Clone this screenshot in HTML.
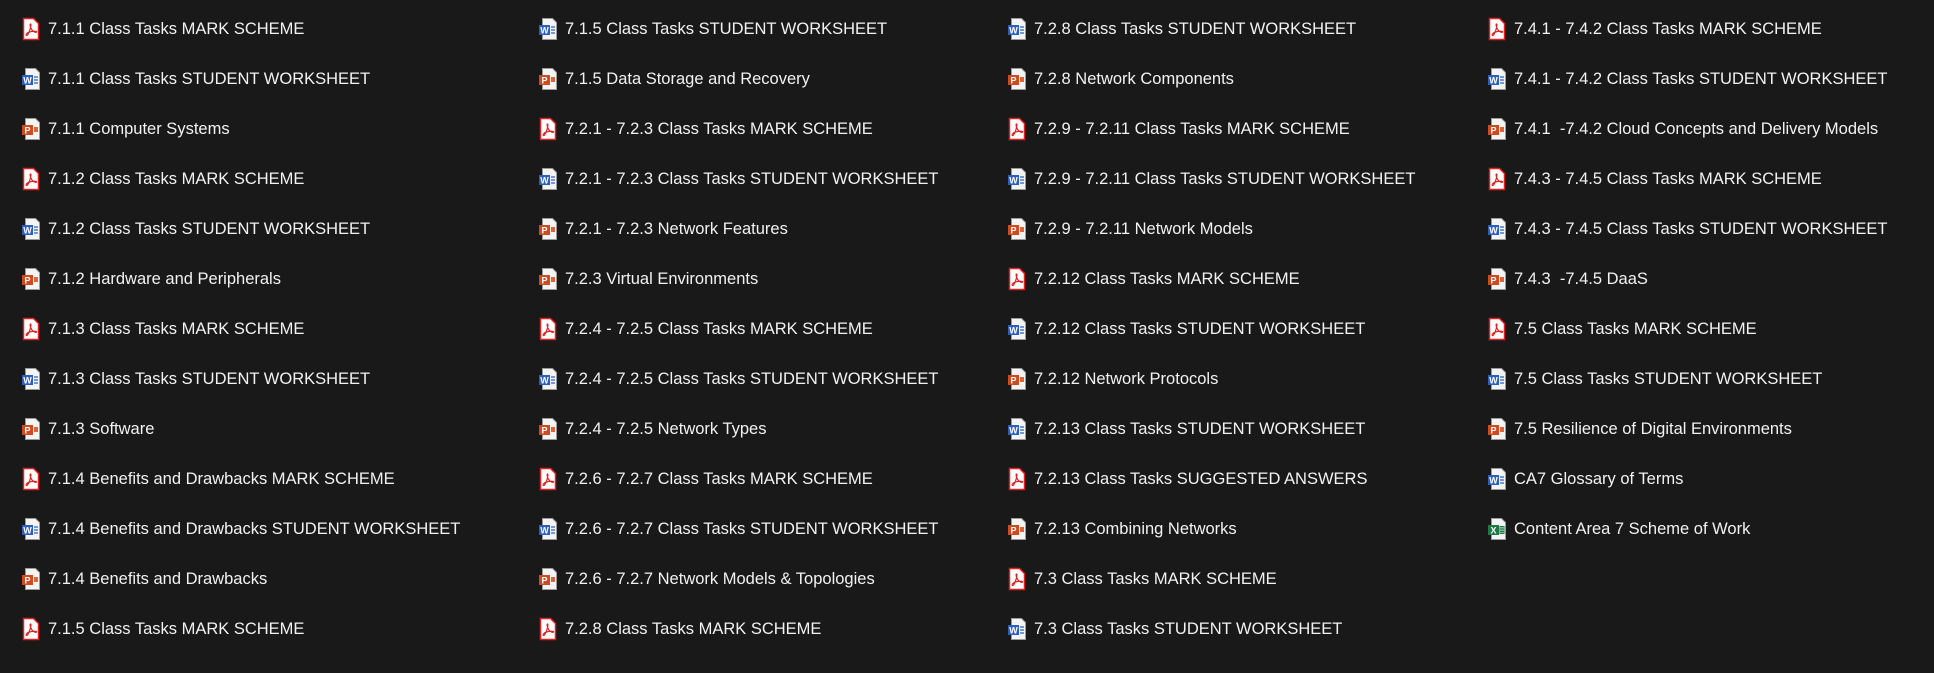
<!DOCTYPE html>
<html><head><meta charset="utf-8"><style>
html,body{margin:0;padding:0;background:#191919;width:1934px;height:673px;overflow:hidden}
body{position:relative;font-family:"Liberation Sans",sans-serif;font-size:16.5px;color:#f2f2f2}
.r{position:absolute;height:24px;line-height:24px;white-space:nowrap}
.r svg{position:absolute;left:-27px;top:0}
</style></head><body>
<svg width="0" height="0" style="position:absolute">
<defs>
<g id="pdf"><path d="M2.5 1.5h10l5 5v16h-15z" fill="#fff" stroke="#e02020" stroke-width="1.5"/><path d="M9.5 7c-1 0 0 4 1.5 6 1 1.5 4 3 4.5 2s-4-1-7 0-4 3-3 3.5 3-4 3.5-6S10.5 7 9.5 7z" fill="none" stroke="#e02020" stroke-width="1.2"/></g>
<g id="doc"><path d="M4.5 1.5h10l4 4v17h-14z" fill="#f4f4f4" stroke="#9a9a9a"/><rect x="1" y="8" width="11" height="10" fill="#2b5fbf"/><text x="6.5" y="16.5" font-size="9" font-weight="bold" fill="#fff" text-anchor="middle" font-family="Liberation Sans">W</text><path d="M13 10h4M13 13h4M13 16h4" stroke="#2b5fbf" stroke-width="1.2"/></g>
<g id="ppt"><path d="M4.5 1.5h10l4 4v17h-14z" fill="#f4f4f4" stroke="#9a9a9a"/><rect x="1" y="8" width="11" height="10" fill="#d04a1f"/><text x="6.5" y="16.5" font-size="9" font-weight="bold" fill="#fff" text-anchor="middle" font-family="Liberation Sans">P</text><path d="M13 10h4v5h-4z" fill="#e0643a"/></g>
<g id="xls"><path d="M4.5 1.5h10l4 4v17h-14z" fill="#f4f4f4" stroke="#9a9a9a"/><rect x="1" y="8" width="11" height="10" fill="#1e7a45"/><text x="6.5" y="16.5" font-size="9" font-weight="bold" fill="#fff" text-anchor="middle" font-family="Liberation Sans">X</text><path d="M13 9.5h4v7h-4zM13 12h4M13 14.5h4M15 9.5v7" fill="none" stroke="#1e7a45" stroke-width="1"/></g>
</defs></svg>
<div id="c"></div>
<script>
var cols=[48,565,1034,1514];
var data=[
[["pdf","7.1.1 Class Tasks MARK SCHEME"],["doc","7.1.1 Class Tasks STUDENT WORKSHEET"],["ppt","7.1.1 Computer Systems"],["pdf","7.1.2 Class Tasks MARK SCHEME"],["doc","7.1.2 Class Tasks STUDENT WORKSHEET"],["ppt","7.1.2 Hardware and Peripherals"],["pdf","7.1.3 Class Tasks MARK SCHEME"],["doc","7.1.3 Class Tasks STUDENT WORKSHEET"],["ppt","7.1.3 Software"],["pdf","7.1.4 Benefits and Drawbacks MARK SCHEME"],["doc","7.1.4 Benefits and Drawbacks STUDENT WORKSHEET"],["ppt","7.1.4 Benefits and Drawbacks"],["pdf","7.1.5 Class Tasks MARK SCHEME"]],
[["doc","7.1.5 Class Tasks STUDENT WORKSHEET"],["ppt","7.1.5 Data Storage and Recovery"],["pdf","7.2.1 - 7.2.3 Class Tasks MARK SCHEME"],["doc","7.2.1 - 7.2.3 Class Tasks STUDENT WORKSHEET"],["ppt","7.2.1 - 7.2.3 Network Features"],["ppt","7.2.3 Virtual Environments"],["pdf","7.2.4 - 7.2.5 Class Tasks MARK SCHEME"],["doc","7.2.4 - 7.2.5 Class Tasks STUDENT WORKSHEET"],["ppt","7.2.4 - 7.2.5 Network Types"],["pdf","7.2.6 - 7.2.7 Class Tasks MARK SCHEME"],["doc","7.2.6 - 7.2.7 Class Tasks STUDENT WORKSHEET"],["ppt","7.2.6 - 7.2.7 Network Models &amp; Topologies"],["pdf","7.2.8 Class Tasks MARK SCHEME"]],
[["doc","7.2.8 Class Tasks STUDENT WORKSHEET"],["ppt","7.2.8 Network Components"],["pdf","7.2.9 - 7.2.11 Class Tasks MARK SCHEME"],["doc","7.2.9 - 7.2.11 Class Tasks STUDENT WORKSHEET"],["ppt","7.2.9 - 7.2.11 Network Models"],["pdf","7.2.12 Class Tasks MARK SCHEME"],["doc","7.2.12 Class Tasks STUDENT WORKSHEET"],["ppt","7.2.12 Network Protocols"],["doc","7.2.13 Class Tasks STUDENT WORKSHEET"],["pdf","7.2.13 Class Tasks SUGGESTED ANSWERS"],["ppt","7.2.13 Combining Networks"],["pdf","7.3 Class Tasks MARK SCHEME"],["doc","7.3 Class Tasks STUDENT WORKSHEET"]],
[["pdf","7.4.1 - 7.4.2 Class Tasks MARK SCHEME"],["doc","7.4.1 - 7.4.2 Class Tasks STUDENT WORKSHEET"],["ppt","7.4.1 &nbsp;-7.4.2 Cloud Concepts and Delivery Models"],["pdf","7.4.3 - 7.4.5 Class Tasks MARK SCHEME"],["doc","7.4.3 - 7.4.5 Class Tasks STUDENT WORKSHEET"],["ppt","7.4.3 &nbsp;-7.4.5 DaaS"],["pdf","7.5 Class Tasks MARK SCHEME"],["doc","7.5 Class Tasks STUDENT WORKSHEET"],["ppt","7.5 Resilience of Digital Environments"],["doc","CA7 Glossary of Terms"],["xls","Content Area 7 Scheme of Work"]]
];
var h="";
data.forEach(function(col,ci){col.forEach(function(it,ri){
h+='<div class="r" style="left:'+cols[ci]+'px;top:'+(17+ri*50)+'px"><svg width="20" height="24" viewBox="0 0 20 24"><use href="#'+it[0]+'"/></svg>'+it[1]+'</div>';});});
document.getElementById("c").innerHTML=h;
</script>
</body></html>
